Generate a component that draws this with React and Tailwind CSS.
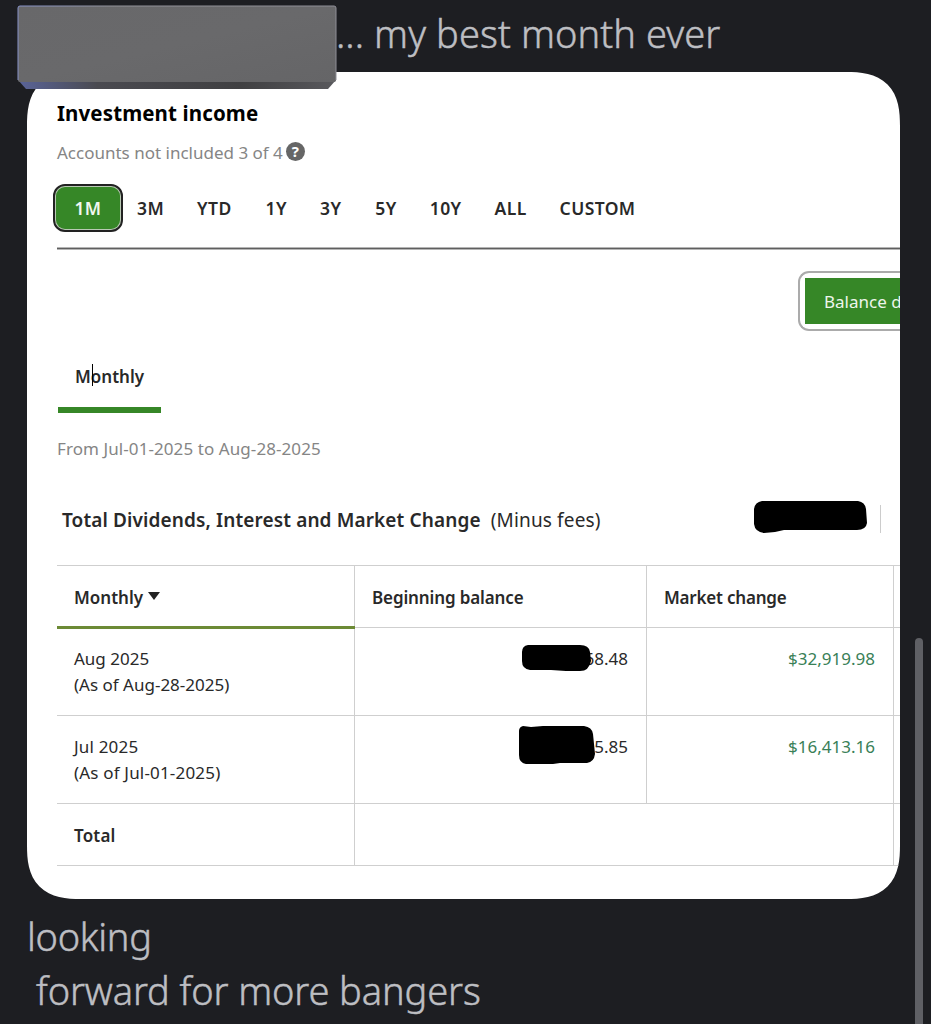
import React from 'react';
import { clsx } from 'clsx';

const ranges = [
    { label: '3M', gap: 'ml-[14px]' },
    { label: 'YTD', gap: 'ml-[33px]' },
    { label: '1Y', gap: 'ml-[34px]' },
    { label: '3Y', gap: 'ml-[33px]' },
    { label: '5Y', gap: 'ml-[34px]' },
    { label: '10Y', gap: 'ml-[33px]' },
    { label: 'ALL', gap: 'ml-[33px]' },
    { label: 'CUSTOM', gap: 'ml-[33px]' },
];

const rows = [
    { month: 'Aug 2025', asOf: '(As of Aug-28-2025)', balance: '68.48', change: '$32,919.98', spacing: '' },
    { month: 'Jul 2025', asOf: '(As of Jul-01-2025)', balance: '5.85', change: '$16,413.16', spacing: 'tracking-[0.18px]' },
];

const scribbles = [
    {
        className: 'left-[166px] top-[16px] w-[71px] h-[28px]',
        viewBox: '0 0 71 28',
        d: 'M7 1 H59 Q68 1 69 8 L70 17 Q68 27 59 27 L45 27 L30 26 H9 Q1 25 1 17 V8 Q1 2 7 1Z',
    },
    {
        className: 'left-[163px] top-[9px] w-[78px] h-[40px]',
        viewBox: '0 0 78 40',
        d: 'M5 1 L13 2 L25 1 H66 Q74 2 75 9 L77 29 Q76 37 69 38 L42 38 L35 39 H8 Q1 38 1 30 V6 Q1 2 5 1Z',
    },
];

const Scribble = ({ className, viewBox, d }) => (
    <svg className={clsx('absolute', className)} viewBox={viewBox}>
        <path d={d} fill="#000" />
    </svg>
);

const Header = () => (
    <header className="relative h-[72px] shrink-0 pl-[336px]">
        <p className="text-[38px] leading-[66px] font-light whitespace-pre tracking-[0.1px] [-webkit-text-stroke:0.5px]">... my best month ever</p>

        {/* Bar covering the author name */}
        <svg className="absolute z-10 left-[17px] top-[5px] w-[321px] h-[85px]" viewBox="0 0 321 85">
            <defs>
                <linearGradient id="face" x1="0" y1="0" x2="1" y2="1">
                    <stop offset="0" stopColor="#68686a" />
                    <stop offset="0.5" stopColor="#69696b" />
                    <stop offset="1" stopColor="#656567" />
                </linearGradient>
                <linearGradient id="edge" x1="0" x2="1">
                    <stop offset="0" stopColor="#5a6499" />
                    <stop offset="0.25" stopColor="#4a4a50" />
                    <stop offset="0.7" stopColor="#404042" />
                    <stop offset="1" stopColor="#59595d" />
                </linearGradient>
                <linearGradient id="rim" x1="0" x2="1">
                    <stop offset="0" stopColor="#8792c9" />
                    <stop offset="0.3" stopColor="#929298" />
                    <stop offset="1" stopColor="#8e8e96" />
                </linearGradient>
            </defs>
            <path d="M1 75 L9 84 H311 L319 75Z" fill="url(#edge)" />
            <rect x="1" y="1" width="318" height="76" rx="2" fill="url(#face)" />
            <path d="M1 75 V3 Q1 1 3 1 H317 Q319 1 319 3 V75" fill="none" stroke="url(#rim)" />
        </svg>
    </header>
);

const RangeTabs = () => (
    <div className="flex items-center h-[48px] mt-[19px] -ml-[4px] text-[17.5px] font-semibold tracking-[0.4px]">
        <button className="w-[70px] h-[48px] p-[1px] rounded-[12px] border-2 border-[#222] bg-[#b9c9b4]">
            <span className="flex items-center justify-center h-full rounded-[9px] bg-[#368727] text-[#f1f7ef]">1M</span>
        </button>
        {ranges.map(({ label, gap }) => (
            <button key={label} className={gap}>{label}</button>
        ))}
    </div>
);

const Table = () => (
    <div className="mt-[30px] border-t border-[#cfcfcf] grid grid-cols-[298px_292px_247px_30px] text-[17px]">
        <div className="relative h-[62px] border-r border-b border-[#cfcfcf] pl-[17px] pt-[2px] flex items-center font-semibold">
            Monthly
            <svg className="ml-[5px] mb-[4px] w-[12px] h-[8px]" viewBox="0 0 12 8">
                <path d="M0 0 H12 L6 8Z" fill="#222" />
            </svg>
            <span className="absolute left-0 -right-[1px] -bottom-[2px] h-[3px] bg-[#6c8a35]" />
        </div>
        <div className="h-[62px] border-r border-b border-[#cfcfcf] pl-[17px] pt-[2px] flex items-center font-semibold tracking-[-0.13px]">Beginning balance</div>
        <div className="h-[62px] border-r border-b border-[#cfcfcf] pl-[17px] pt-[2px] flex items-center font-semibold tracking-[-0.2px]">Market change</div>
        <div className="border-b border-[#cfcfcf]" />
        {rows.map((row, i) => (
            <React.Fragment key={row.month}>
                <div className={clsx('h-[88px] border-r border-b border-[#cfcfcf] pl-[17px] pt-[18px] leading-[26px]', row.spacing)}>
                    <p>{row.month}</p>
                    <p>{row.asOf}</p>
                </div>
                <div className="relative h-[88px] border-r border-b border-[#cfcfcf] pr-[18px] pt-[18px] text-right leading-[26px]">
                    {row.balance}
                    <Scribble {...scribbles[i]} />
                </div>
                <div className="h-[88px] border-r border-b border-[#cfcfcf] pr-[18px] pt-[18px] text-right leading-[26px] text-[#398057]">{row.change}</div>
                <div className="border-b border-[#cfcfcf]" />
            </React.Fragment>
        ))}
        <div className="h-[62px] border-r border-b border-[#cfcfcf] pl-[17px] pt-[2px] flex items-center font-semibold tracking-[0.2px]">Total</div>
        <div className="col-span-2 h-[62px] border-r border-b border-[#cfcfcf]" />
        <div className="border-b border-[#cfcfcf]" />
    </div>
);

const Card = () => (
    <section className="ml-[27px] w-[873px] h-[827px] shrink-0 overflow-hidden rounded-[54px] [corner-shape:superellipse(1.4)] bg-white pl-[30px] text-[#292929]">
        <h1 className="mt-[27px] text-[20.5px] leading-[28px] font-bold text-black tracking-[0.12px]">Investment income</h1>
        <div className="mt-[13px] flex items-center h-[25px] text-[17px] text-[#858585]">
            <span>Accounts not included 3 of 4</span>
            <span className="ml-[3px] mb-[3px] flex items-center justify-center size-[19px] rounded-full bg-[#666] text-white text-[15px] font-bold">?</span>
        </div>

        <RangeTabs />
        <div className="mt-[15px] h-[3px] border-y border-[#b5b5b5] bg-[#5f5f5f]" />

        <div className="mt-[21px] flex justify-end">
            <div className="w-[102px] h-[60px] rounded-l-[11px] border-2 border-r-0 border-[#ababab] pl-[5px] py-[5px]">
                <div className="h-full bg-[#368727] pl-[19px] pt-[1px] flex items-center text-[17px] text-[#eef5ec] whitespace-nowrap">Balance d</div>
            </div>
        </div>

        <div className="relative mt-[32px] ml-[1px] w-[103px] h-[50px] border-b-[6px] border-[#368727] pl-[17px] text-[17px] leading-[27px] font-semibold">
            Monthly
            <span className="absolute left-[34px] top-[1px] w-[1px] h-[22px] bg-black" />
        </div>

        <p className="mt-[22px] text-[17px] leading-[27px] text-[#858585] tracking-[0.08px]">From Jul-01-2025 to Aug-28-2025</p>

        <div className="relative mt-[43px] ml-[5px] h-[30px] text-[19px] leading-[30px] whitespace-nowrap">
            <span className="font-semibold tracking-[0.12px]">Total Dividends, Interest and Market Change</span>
            <span className="ml-[10px] tracking-[0.15px]">(Minus fees)</span>
            <Scribble
                className="left-[691px] -top-[5px] w-[115px] h-[34px]"
                viewBox="0 0 115 34"
                d="M9 1 H105 Q112 2 113 9 L114 23 Q113 30 104 30 H31 L22 32 L11 33 Q2 32 1 24 V9 Q2 2 9 1Z"
            />
            <span className="absolute left-[818px] top-0 w-[1px] h-[28px] bg-[#ccc]" />
        </div>

        <Table />
    </section>
);

const App = () => {
    return (
        <main className="relative flex flex-col w-[931px] h-[1024px] overflow-hidden bg-[#1d1e22] text-[#bdbec2] font-['Noto_Sans','Open_Sans',sans-serif]">
            <Header />
            <Card />
            <div className="pl-[27px] pt-[10px] text-[38px] leading-[54px] font-light tracking-[-0.1px] whitespace-pre [-webkit-text-stroke:0.5px]">
                <p className="tracking-[-0.3px]">looking</p>
                <p className="pl-[9px]">forward for more bangers</p>
            </div>
            {/* Scrollbar thumb */}
            <div className="absolute right-[8px] top-[638px] w-[8px] h-[400px] rounded-full bg-[#5f6065]" />
        </main>
    );
};

export default App;
